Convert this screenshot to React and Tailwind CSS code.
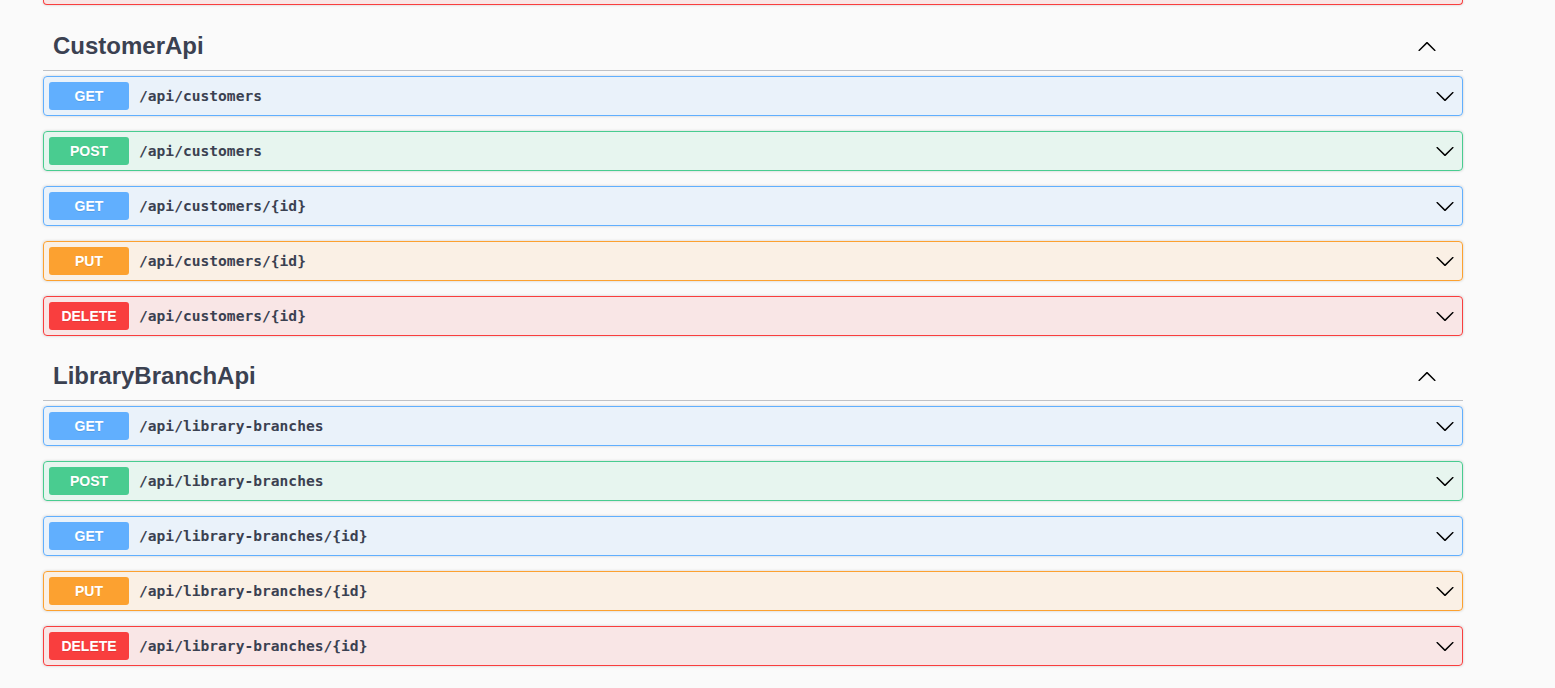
import React from "react";

const methodStyles = {
  GET: {
    row: "border-[#61affe] bg-[#61affe]/10",
    badge: "bg-[#61affe]",
  },
  POST: {
    row: "border-[#49cc90] bg-[#49cc90]/10",
    badge: "bg-[#49cc90]",
  },
  PUT: {
    row: "border-[#fca130] bg-[#fca130]/10",
    badge: "bg-[#fca130]",
  },
  DELETE: {
    row: "border-[#f93e3e] bg-[#f93e3e]/10",
    badge: "bg-[#f93e3e]",
  },
};

const sections = [
  {
    name: "CustomerApi",
    ops: [
      { method: "GET", path: "/api/customers" },
      { method: "POST", path: "/api/customers" },
      { method: "GET", path: "/api/customers/{id}" },
      { method: "PUT", path: "/api/customers/{id}" },
      { method: "DELETE", path: "/api/customers/{id}" },
    ],
  },
  {
    name: "LibraryBranchApi",
    ops: [
      { method: "GET", path: "/api/library-branches" },
      { method: "POST", path: "/api/library-branches" },
      { method: "GET", path: "/api/library-branches/{id}" },
      { method: "PUT", path: "/api/library-branches/{id}" },
      { method: "DELETE", path: "/api/library-branches/{id}" },
    ],
  },
];

// chevron shapes taken from the swagger arrows
const ArrowDown = () => (
  <svg width="20" height="20" viewBox="0 0 20 20" fill="#000">
    <path d="M17.418 6.109c.272-.268.709-.268.979 0s.271.701 0 .969l-7.908 7.83c-.27.268-.707.268-.979 0l-7.908-7.83c-.27-.268-.27-.701 0-.969.271-.268.709-.268.979 0L10 13.25l7.418-7.141z" />
  </svg>
);

const ArrowUp = () => (
  <svg width="20" height="20" viewBox="0 0 20 20" fill="#000">
    <path d="M17.418 14.908c.272.268.709.268.979 0s.271-.701 0-.969l-7.908-7.83c-.27-.268-.707-.268-.979 0l-7.908 7.83c-.27.268-.27.701 0 .969.271.268.709.268.979 0L10 7.767l7.418 7.141z" />
  </svg>
);

const OpRow = ({ method, path }) => {
  const s = methodStyles[method];
  return (
    <div
      className={`mb-[15px] flex h-[40px] items-center rounded border p-[5px] shadow-[0_0_3px_rgba(0,0,0,0.19)] ${s.row}`}
    >
      <span
        className={`flex h-[28px] min-w-[80px] items-center justify-center rounded-[3px] text-[14px] font-bold text-white [text-shadow:0_1px_0_rgba(0,0,0,0.1)] ${s.badge}`}
        style={{ fontFamily: '"Liberation Sans", Arial, sans-serif' }}
      >
        {method}
      </span>
      <span
        className="flex-1 px-[10px] text-[14.6px] font-bold text-[#3b4151]"
        style={{ fontFamily: '"DejaVu Sans Mono", "Liberation Mono", monospace' }}
      >
        {path}
      </span>
      <span className="mr-[2px] flex items-center">
        <ArrowDown />
      </span>
    </div>
  );
};

const Section = ({ name, ops }) => (
  <div>
    <div className="mb-[5px] flex h-[50px] items-center border-b border-[#3b4151]/30 pl-[10px] pr-[26px]">
      <h3
        className="flex-1 text-[24px] font-bold text-[#3b4151]"
        style={{ fontFamily: '"Liberation Sans", Arial, sans-serif' }}
      >
        {name}
      </h3>
      <ArrowUp />
    </div>
    {ops.map((op, i) => (
      <OpRow key={i} method={op.method} path={op.path} />
    ))}
  </div>
);

export default function App() {
  return (
    <div className="min-h-[688px] w-full bg-[#fafafa]">
      <div className="ml-[43px] w-[1420px]">
        {/* tail of the block above */}
        <div className="mb-[16px] h-[5px] rounded-b border-x border-b border-[#f93e3e] bg-[#f93e3e]/10 shadow-[0_0_3px_rgba(0,0,0,0.19)]" />
        {sections.map((sec) => (
          <Section key={sec.name} name={sec.name} ops={sec.ops} />
        ))}
      </div>
    </div>
  );
}
